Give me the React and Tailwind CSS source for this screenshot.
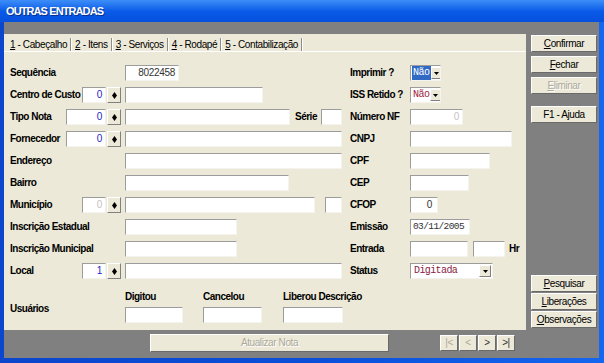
import React from 'react';

const sans = "font-['Liberation_Sans',Arial,sans-serif]";
const mono = "font-['Liberation_Mono','Courier_New',monospace]";

function Box({ className = '', children }) {
  return (
    <div className={`h-[16px] shrink-0 bg-white border border-t-[#9c9c9c] border-l-[#9c9c9c] border-r-[#f4f3ee] border-b-[#f4f3ee] flex items-center overflow-hidden text-[10px] tracking-[-0.3px] leading-none whitespace-nowrap ${className}`}>
      {children}
    </div>
  );
}

function Pick() {
  return (
    <div className="w-[14px] h-[16px] ml-[1px] shrink-0 bg-[#ece9d8] border border-t-white border-l-white border-r-[#808080] border-b-[#808080] flex items-center justify-center">
      <svg width="5" height="7" viewBox="0 0 5 7">
        <path d="M2.5 0L5 3.5 2.5 7 0 3.5z" fill="#000" />
      </svg>
    </div>
  );
}

function Arrow() {
  return (
    <div className="w-[12px] h-[12px] shrink-0 bg-[#ece9d8] border border-t-white border-l-white border-r-[#808080] border-b-[#808080] flex items-center justify-center">
      <svg width="5" height="3" viewBox="0 0 5 3">
        <path d="M0 0H5L2.5 3z" fill="#000" />
      </svg>
    </div>
  );
}

function Label({ children, className = '' }) {
  return (
    <span className={`text-[10px] tracking-[-0.5px] font-bold text-black leading-none whitespace-nowrap ${className}`}>
      {children}
    </span>
  );
}

function Btn({ u, rest, disabled, className = '' }) {
  return (
    <div className={`h-[17px] w-[66px] bg-[#ece9d8] border border-t-white border-l-white border-r-[#6a6a6a] border-b-[#6a6a6a] flex items-center justify-center text-[10px] tracking-[-0.4px] leading-none whitespace-nowrap ${disabled ? 'text-[#aca899] [text-shadow:1px_1px_0_#fff]' : 'text-black'} ${className}`}>
      <span>
        {u && <span className="underline">{u}</span>}
        {rest}
      </span>
    </div>
  );
}

function Row({ left, right }) {
  return (
    <div className="h-[22px] flex items-center">
      <div className="w-[340px] flex items-center">{left}</div>
      <div className="flex items-center">{right}</div>
    </div>
  );
}

function LeftLabel({ children, code }) {
  return (
    <div className="w-[115px] pr-[4px] flex items-center">
      <Label>{children}</Label>
      {code && <div className="ml-auto flex items-center">{code}</div>}
    </div>
  );
}

function RightLabel({ children }) {
  return (
    <div className="w-[60px] flex items-center">
      <Label>{children}</Label>
    </div>
  );
}

function Code({ value, className, muted }) {
  return (
    <>
      <Box className={`${className} justify-end pr-[3px] ${muted ? 'text-[#c4c4c4]' : 'text-[#2424c8]'}`}>{value}</Box>
      <Pick />
    </>
  );
}

const tabs = [
  ['1', ' - Cabeçalho'],
  ['2', ' - Itens'],
  ['3', ' - Serviços'],
  ['4', ' - Rodapé'],
  ['5', ' - Contabilização'],
];

export default function App() {
  return (
    <div className={`w-[604px] h-[363px] flex flex-col bg-[#0a4ed8] overflow-hidden ${sans}`}>
      {/* title bar */}
      <div className="h-[22px] shrink-0 flex items-center pl-[6px] bg-gradient-to-b from-[#3d8ef8] via-[#0a5be8] to-[#0650dc]">
        <span className="text-white font-bold text-[11px] tracking-[-0.9px] leading-none [text-shadow:1px_1px_0_#0a2f8f]">OUTRAS ENTRADAS</span>
      </div>

      <div className="flex-1 flex pl-[4px] pr-[5px] pb-[5px] bg-gradient-to-r from-[#0b46cc] via-[#0a4ed8] to-[#1566f0]">
        <div className="flex-1 flex bg-[#808080]">
          {/* left side */}
          <div className="w-[522px] flex flex-col">
            <div className="h-[12px] shrink-0" />
            <div className="h-[296px] bg-[#ece9d8] flex flex-col">
              {/* tabs */}
              <div className="h-[17px] pt-[4px] pl-[2px] flex items-stretch text-[10px] tracking-[-0.4px] leading-none text-black whitespace-nowrap">
                {tabs.map(([n, t]) => (
                  <div
                    key={n}
                    className="flex items-center pl-[4px] pr-[3px] border-r border-r-[#8c8c8c] shadow-[1px_0_0_#fff]"
                  >
                    <span>
                      <span className="underline">{n}</span>
                      {t}
                    </span>
                  </div>
                ))}
              </div>
              <div className="border-t border-t-white" />

              {/* form */}
              <div className="pt-[10px] pl-[6px] flex flex-col">
                <Row
                  left={<><LeftLabel>Sequência</LeftLabel><Box className="w-[54px] justify-end pr-[3px] text-[#333]">8022458</Box></>}
                  right={<><RightLabel>Imprimir ?</RightLabel>
                    <Box className="w-[31px] justify-between pl-[1px] pr-[1px]">
                      <span className={`${mono} text-[10px] tracking-[-0.5px] bg-[#316ac5] text-white px-[1px] py-[2px]`}>Não</span>
                      <Arrow />
                    </Box></>}
                />
                <Row
                  left={<><LeftLabel code={<Code value="0" className="w-[24px]" />}>Centro de Custo</LeftLabel><Box className="w-[138px]" /></>}
                  right={<><RightLabel>ISS Retido ?</RightLabel>
                    <Box className="w-[31px] justify-between pl-[2px] pr-[1px]">
                      <span className={`${mono} text-[10px] tracking-[-0.5px] text-[#a01c3c]`}>Não</span>
                      <Arrow />
                    </Box></>}
                />
                <Row
                  left={<><LeftLabel code={<Code value="0" className="w-[40px]" />}>Tipo Nota</LeftLabel>
                    <Box className="w-[165px]" />
                    <Label className="ml-[5px]">Série</Label>
                    <Box className="w-[21px] ml-[4px]" /></>}
                  right={<><RightLabel>Número NF</RightLabel><Box className="w-[53px] justify-end pr-[3px] text-[#c4c4c4]">0</Box></>}
                />
                <Row
                  left={<><LeftLabel code={<Code value="0" className="w-[40px]" />}>Fornecedor</LeftLabel><Box className="w-[217px]" /></>}
                  right={<><RightLabel>CNPJ</RightLabel><Box className="w-[102px]" /></>}
                />
                <Row
                  left={<><LeftLabel>Endereço</LeftLabel><Box className="w-[217px]" /></>}
                  right={<><RightLabel>CPF</RightLabel><Box className="w-[80px]" /></>}
                />
                <Row
                  left={<><LeftLabel>Bairro</LeftLabel><Box className="w-[164px]" /></>}
                  right={<><RightLabel>CEP</RightLabel><Box className="w-[59px]" /></>}
                />
                <Row
                  left={<><LeftLabel code={<Code value="0" className="w-[24px]" muted />}>Município</LeftLabel>
                    <Box className="w-[190px]" />
                    <Box className="w-[17px] ml-[10px]" /></>}
                  right={<><RightLabel>CFOP</RightLabel><Box className="w-[28px] justify-end pr-[5px] text-[#333]">0</Box></>}
                />
                <Row
                  left={<><LeftLabel>Inscrição Estadual</LeftLabel><Box className="w-[112px]" /></>}
                  right={<><RightLabel>Emissão</RightLabel>
                    <Box className={`w-[60px] pl-[2px] ${mono} !text-[9.5px] !tracking-[-0.6px] text-[#333]`}>03/11/2005</Box></>}
                />
                <Row
                  left={<><LeftLabel>Inscrição Municipal</LeftLabel><Box className="w-[112px]" /></>}
                  right={<><RightLabel>Entrada</RightLabel>
                    <Box className="w-[58px]" />
                    <Box className="w-[32px] ml-[5px]" />
                    <Label className="ml-[4px]">Hr</Label></>}
                />
                <Row
                  left={<><LeftLabel code={<Code value="1" className="w-[24px]" />}>Local</LeftLabel><Box className="w-[217px]" /></>}
                  right={<><RightLabel>Status</RightLabel>
                    <Box className="w-[83px] justify-between pl-[3px] pr-[1px]">
                      <span className={`${mono} text-[10px] tracking-[-0.6px] text-[#8a1c44]`}>Digitada</span>
                      <Arrow />
                    </Box></>}
                />

                {/* usuários */}
                <div className="mt-[10px] flex items-end">
                  <div className="w-[115px] pb-[4px]">
                    <Label>Usuários</Label>
                  </div>
                  <div className="flex flex-col gap-[5px] w-[58px]">
                    <Label>Digitou</Label>
                    <Box className="w-[58px]" />
                  </div>
                  <div className="flex flex-col gap-[5px] ml-[20px]">
                    <Label>Cancelou</Label>
                    <Box className="w-[59px]" />
                  </div>
                  <div className="flex flex-col gap-[5px] ml-[21px]">
                    <Label>Liberou Descrição</Label>
                    <Box className="w-[60px]" />
                  </div>
                </div>
              </div>
            </div>

            {/* bottom strip */}
            <div className="flex-1 flex items-start pt-[4px]">
              <div className="ml-[146px] w-[239px] h-[18px] bg-[#ece9d8] border border-t-white border-l-white border-r-[#6a6a6a] border-b-[#6a6a6a] flex items-center justify-center text-[10px] tracking-[-0.4px] leading-none text-[#aca899] [text-shadow:1px_1px_0_#fff]">
                Atualizar Nota
              </div>
              <div className="ml-[51px] mt-[1px] flex gap-[1px]">
                {[['|<', true], ['<', true], ['>', false], ['>|', false]].map(([g, dis]) => (
                  <div
                    key={g}
                    className={`w-[18px] h-[16px] bg-[#ece9d8] border border-t-white border-l-white border-r-[#6a6a6a] border-b-[#6a6a6a] flex items-center justify-center text-[10px] tracking-[-0.5px] leading-none ${dis ? 'text-[#aca899]' : 'text-[#333]'}`}
                  >
                    {g}
                  </div>
                ))}
              </div>
            </div>
          </div>

          {/* right button panel */}
          <div className="flex-1 flex flex-col pl-[5px] pt-[13px] pb-[30px]">
            <Btn u="C" rest="onfirmar" />
            <Btn u="F" rest="echar" className="mt-[4px]" />
            <Btn u="E" rest="liminar" disabled className="mt-[4px]" />
            <Btn rest="F1 - Ajuda" className="mt-[12px]" />
            <div className="mt-auto flex flex-col gap-[1px]">
              <Btn u="P" rest="esquisar" />
              <Btn u="L" rest="iberações" />
              <Btn u="O" rest="bservações" />
            </div>
          </div>
        </div>
      </div>
    </div>
  );
}
